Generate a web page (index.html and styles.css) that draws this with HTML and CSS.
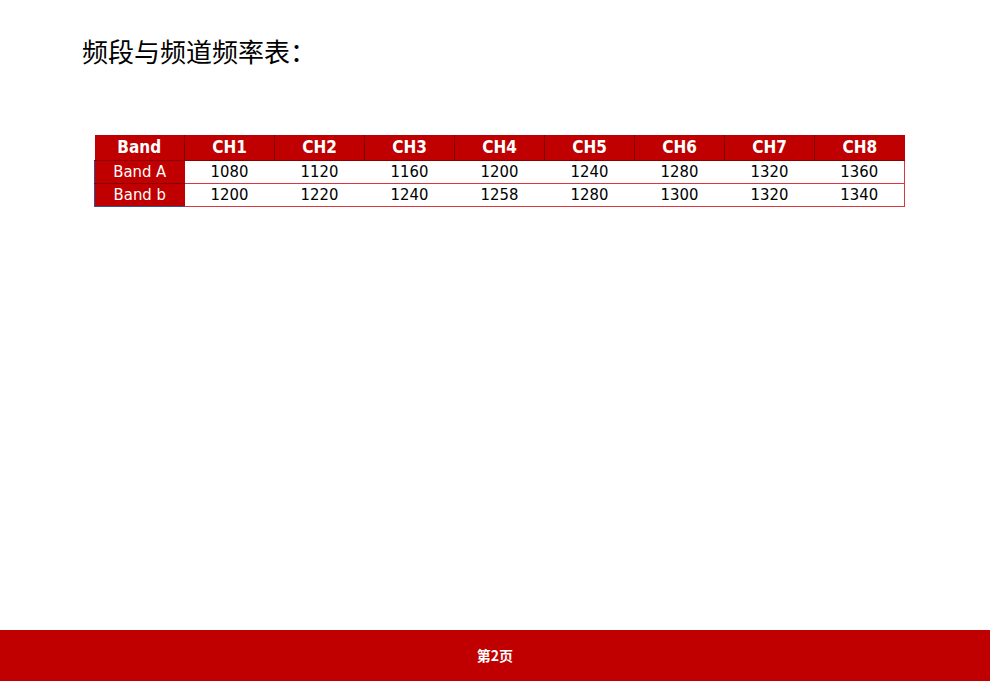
FILE: index.html
```html
<!DOCTYPE html>
<html lang="zh">
<head>
<meta charset="utf-8">
<link rel="stylesheet" href="styles.css">
</head>
<body>
<div class="page">
  <h1 class="title">频段与频道频率表：</h1>
  <table class="freq">
    <thead>
      <tr><th>Band</th><th>CH1</th><th>CH2</th><th>CH3</th><th>CH4</th><th>CH5</th><th>CH6</th><th>CH7</th><th>CH8</th></tr>
    </thead>
    <tbody>
      <tr><td class="band">Band A</td><td>1080</td><td>1120</td><td>1160</td><td>1200</td><td>1240</td><td>1280</td><td>1320</td><td>1360</td></tr>
      <tr><td class="band">Band b</td><td>1200</td><td>1220</td><td>1240</td><td>1258</td><td>1280</td><td>1300</td><td>1320</td><td>1340</td></tr>
    </tbody>
  </table>
  <div class="footer">第2页</div>
</div>
</body>
</html>
```
FILE: styles.css
```css
html, body {
  margin: 0;
  padding: 0;
  background: #ffffff;
}
.page {
  width: 990px;
  height: 681px;
  display: flex;
  flex-direction: column;
  font-family: "Liberation Sans Narrow", "DejaVu Sans Condensed", "Noto Sans", "Noto Sans CJK SC", sans-serif;
}
.title {
  margin: 34px 0 0 82px;
  font-family: "Noto Sans CJK SC", sans-serif;
  font-size: 26px;
  font-weight: 400;
  line-height: 34px;
  color: #000;
}
.freq {
  margin: 67px 0 0 94px;
  border-collapse: collapse;
  table-layout: fixed;
  width: 811px;
  font-size: 16.5px;
}
.freq th, .freq td {
  width: 90px;
  padding: 0;
  text-align: center;
  box-sizing: border-box;
  line-height: 20px;
}
.freq th {
  height: 25px;
  background: #c00000;
  color: #fff;
  font-weight: 700;
  font-size: 17px;
  border-left: 1px solid #7a0000;
  border-bottom: 1px solid #8b0000;
}
.freq th:first-child { border-left: none; }
.freq td {
  height: 23px;
  color: #000;
  border-bottom: 1px solid #d9363e;
}
.freq td:last-child { border-right: 1px solid #d9363e; }
.freq td.band {
  background: #c00000;
  color: #fff;
  border-left: 1px solid #2e5597;
  border-bottom: 1px solid #8b0000;
}
.freq tr:last-child td.band { border-bottom: 1px solid #2e5597; }
.footer {
  margin-top: auto;
  height: 51px;
  background: #c00000;
  color: #fff;
  font-family: "Noto Sans CJK SC", sans-serif;
  font-weight: 700;
  font-size: 14px;
  display: flex;
  align-items: center;
  justify-content: center;
  padding-bottom: 2px;
  box-sizing: border-box;
}
```
